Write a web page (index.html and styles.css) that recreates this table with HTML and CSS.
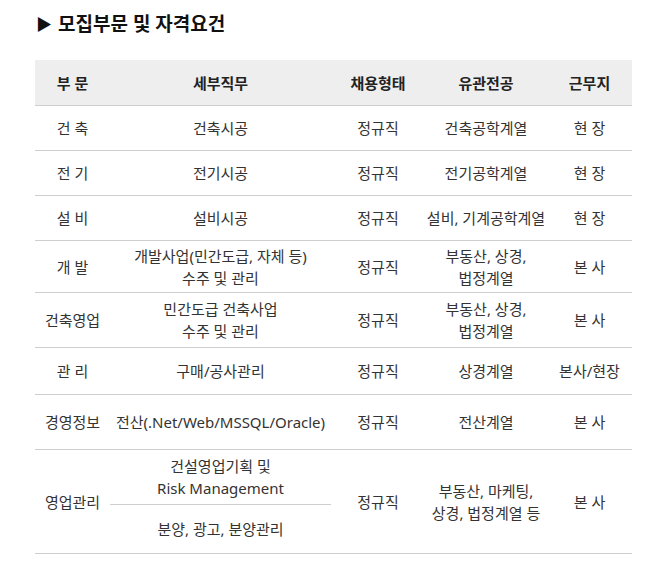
FILE: index.html
```html
<!DOCTYPE html>
<html lang="ko">
<head>
<meta charset="utf-8">
<link rel="stylesheet" href="styles.css">
</head>
<body>
<div class="wrap">
  <h2 class="title"><span class="tri">&#9654;</span>모집부문 및 자격요건</h2>
  <table class="jobs">
    <colgroup>
      <col class="c1"><col class="c2"><col class="c3"><col class="c4"><col class="c5">
    </colgroup>
    <thead>
      <tr class="head">
        <th>부 문</th><th>세부직무</th><th>채용형태</th><th>유관전공</th><th>근무지</th>
      </tr>
    </thead>
    <tbody>
      <tr class="h45"><td>건 축</td><td>건축시공</td><td>정규직</td><td>건축공학계열</td><td>현 장</td></tr>
      <tr class="h45"><td>전 기</td><td>전기시공</td><td>정규직</td><td>전기공학계열</td><td>현 장</td></tr>
      <tr class="h45"><td>설 비</td><td>설비시공</td><td>정규직</td><td>설비, 기계공학계열</td><td>현 장</td></tr>
      <tr class="h52"><td>개 발</td><td>개발사업(민간도급, 자체 등)<br>수주 및 관리</td><td>정규직</td><td>부동산, 상경,<br>법정계열</td><td>본 사</td></tr>
      <tr class="h55"><td>건축영업</td><td>민간도급 건축사업<br>수주 및 관리</td><td>정규직</td><td>부동산, 상경,<br>법정계열</td><td>본 사</td></tr>
      <tr class="h47"><td>관 리</td><td>구매/공사관리</td><td>정규직</td><td>상경계열</td><td>본사/현장</td></tr>
      <tr class="h55"><td>경영정보</td><td class="tight">전산(.Net/Web/MSSQL/Oracle)</td><td>정규직</td><td>전산계열</td><td>본 사</td></tr>
      <tr class="h55"><td rowspan="2">영업관리</td><td>건설영업기획 및<br>Risk Management</td><td rowspan="2">정규직</td><td rowspan="2">부동산, 마케팅,<br>상경, 법정계열 등</td><td rowspan="2">본 사</td></tr>
      <tr class="h49"><td>분양, 광고, 분양관리</td></tr>
    </tbody>
  </table>
</div>
</body>
</html>
```

FILE: styles.css
```css
html, body {
  margin: 0;
  padding: 0;
  background: #fff;
}
body {
  font-family: "Noto Sans", "Noto Sans CJK KR", sans-serif;
  color: #333;
}
.wrap {
  padding: 12px 0 0 35px;
}
.title {
  margin: 0 0 24px 0;
  font-size: 19px;
  font-weight: 700;
  color: #111;
  line-height: 24px;
  height: 24px;
}
.tri {
  display: inline-block;
  font-size: 16px;
  margin: 0 6px 0 1px;
  vertical-align: 1px;
}
.jobs {
  border-collapse: collapse;
  width: 597px;
  table-layout: fixed;
  font-size: 15px;
  line-height: 22px;
}
.c1 { width: 75px; }
.c2 { width: 221px; }
.c3 { width: 94px; }
.c4 { width: 122px; }
.c5 { width: 85px; }
.jobs th, .jobs td {
  padding: 0;
  text-align: center;
  vertical-align: middle;
  border-bottom: 1px solid #cfcfcf;
}
.jobs th {
  background: #eeeeee;
  font-weight: 700;
  color: #222;
  height: 45px;
}
.h45 td { height: 44px; }
.h47 td { height: 46px; }
.h49 td { height: 48px; }
.h52 td { height: 51px; }
.h55 td { height: 54px; }
.tight { white-space: nowrap; }
```
